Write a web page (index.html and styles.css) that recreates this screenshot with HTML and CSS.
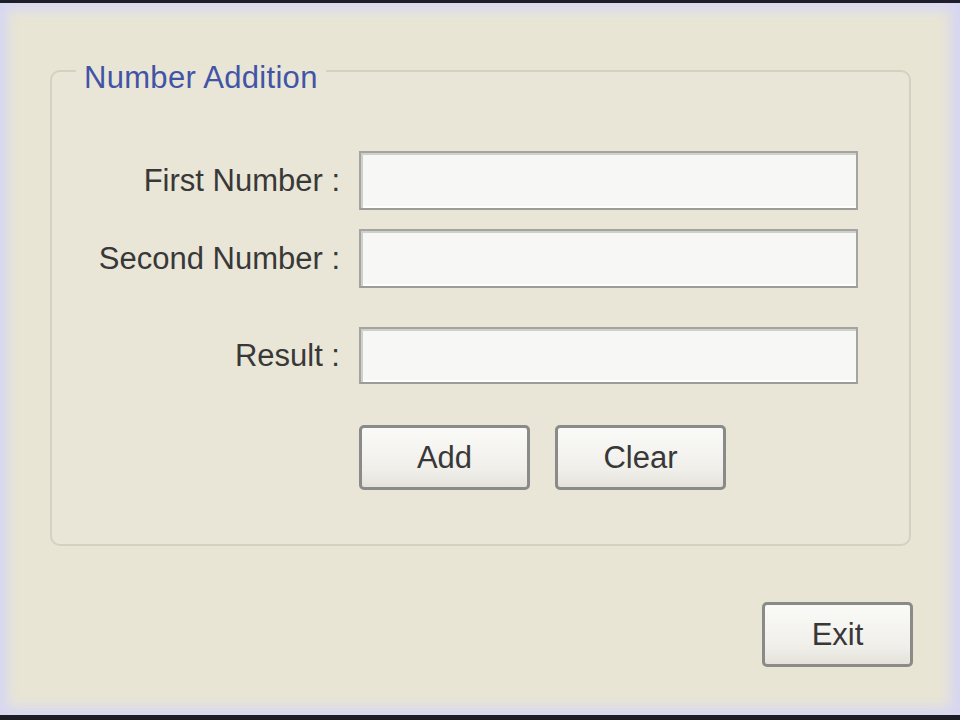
FILE: index.html
```html
<!DOCTYPE html>
<html>
<head>
<meta charset="utf-8">
<link rel="stylesheet" href="styles.css">
</head>
<body>
<div class="window">
  <fieldset class="group">
    <legend class="group-title">Number Addition</legend>
    <div class="form">
      <label class="label">First Number :</label>
      <div class="field"></div>
      <label class="label">Second Number :</label>
      <div class="field"></div>
      <label class="label row-result">Result :</label>
      <div class="field field-result row-result"></div>
      <div class="actions">
        <button class="btn">Add</button>
        <button class="btn">Clear</button>
      </div>
    </div>
  </fieldset>
  <div class="footer">
    <button class="btn btn-exit">Exit</button>
  </div>
</div>
</body>
</html>
```
FILE: styles.css
```css
html, body {
  margin: 0;
  padding: 0;
  background: #e8e5d5;
}
body {
  font-family: "Liberation Sans", Arial, sans-serif;
  color: #353535;
}
.window {
  box-sizing: border-box;
  width: 960px;
  height: 720px;
  border-top: 3px solid #1e1e2a;
  border-bottom: 5px solid #1c1c24;
  background: #e8e5d5;
  box-shadow:
    inset 9px 0 14px -3px #d6d6f2,
    inset -12px 0 14px -3px #d6d6f2,
    inset 0 10px 14px -3px #dcdcf2,
    inset 0 -10px 14px -3px #d9d9f2;
  padding: 43px 49px 0 50px;
}
.group {
  margin: 0;
  padding: 55px 0 54px 0;
  border: 2px solid #d3d1c1;
  border-radius: 10px;
  width: 861px;
  box-sizing: border-box;
  background: #e9e6d7;
}
.group-title {
  margin-left: 24px;
  padding: 14px 8px 0;
  font-size: 31px;
  line-height: 36px;
  color: #4254a6;
  letter-spacing: 0.3px;
}
.form {
  display: grid;
  grid-template-columns: 288px 499px;
  column-gap: 19px;
  row-gap: 19px;
  align-items: center;
}
.label {
  text-align: right;
  font-size: 31px;
  line-height: 36px;
  white-space: nowrap;
  color: #383838;
}
.field {
  box-sizing: border-box;
  height: 59px;
  border: 2px solid #a4a4a0;
  border-bottom-color: #9c9c98;
  background: #f7f7f5;
  box-shadow: inset 2px 2px 0 #cfcfcc, inset 0 -2px 0 #ffffff;
}
.field-result {
  height: 57px;
}
.row-result {
  margin-top: 20px;
}
.actions {
  grid-column: 2;
  display: flex;
  gap: 25px;
  margin-top: 22px;
}
.btn {
  box-sizing: border-box;
  width: 171px;
  height: 65px;
  border: 3px solid #8a8a88;
  border-radius: 5px;
  background: linear-gradient(#fafaf8, #f0efea 70%, #e4e2da);
  font-family: "Liberation Sans", Arial, sans-serif;
  font-size: 31px;
  color: #383838;
  padding: 0;
}
.footer {
  display: flex;
  justify-content: flex-end;
  padding-top: 56px;
  margin-right: -2px;
}
.btn-exit {
  width: 151px;
}
```
